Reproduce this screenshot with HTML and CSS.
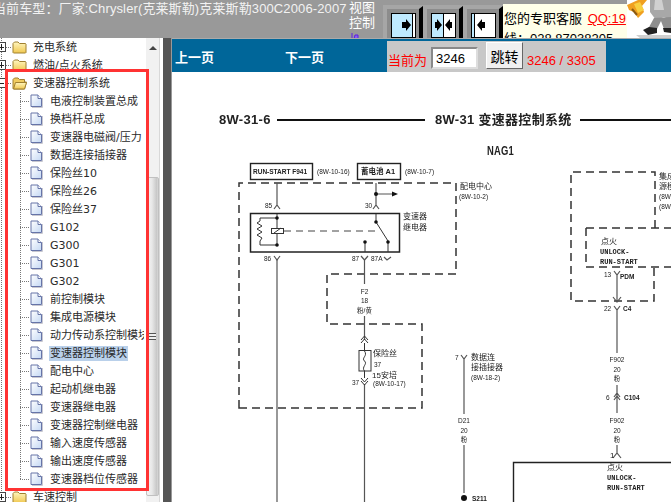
FILE: index.html
```html
<!DOCTYPE html>
<html lang="zh">
<head>
<meta charset="utf-8">
<title>变速器控制系统</title>
<link rel="stylesheet" href="styles.css">
</head>
<body>
<svg class="defs" aria-hidden="true">
  <defs>
    <linearGradient id="fold" x1="0" y1="0" x2="0" y2="1"><stop offset="0" stop-color="#fff6c0"/><stop offset="1" stop-color="#f0c850"/></linearGradient>
    <linearGradient id="page" x1="0" y1="0" x2="1" y2="1"><stop offset="0" stop-color="#ffffff"/><stop offset="1" stop-color="#c4d8f4"/></linearGradient>
    <symbol id="folder" viewBox="0 0 15 13"><path d="M1 11.5V2.5L2.5 1H6L7.5 2.5H13.5L14 3V11.5L13.5 12H1.5Z" fill="url(#fold)" stroke="#a08030"/></symbol>
    <symbol id="folder-open" viewBox="0 0 15 13"><path d="M1 11.5V2.5L2.5 1H6L7.5 2.5H12.5V5H14.5L12.5 12H1.5Z" fill="#f0cc60" stroke="#a08030"/><path d="M1.5 12L3.5 5.5H14.5L12.5 12Z" fill="url(#fold)" stroke="#a08030"/></symbol>
    <symbol id="doc" viewBox="0 0 13 14"><path d="M2 13.5H12.5V4" fill="none" stroke="#c8c8d0"/><path d="M1 1H8L11.5 4.5V12.5H1Z" fill="url(#page)" stroke="#6674a8"/><path d="M8 1V4.5H11.5" fill="#fff" stroke="#6674a8"/></symbol>
  </defs>
</svg>
<div class="app">
  <header class="topbar">
    <div class="title">当前车型：厂家:Chrysler(克莱斯勒)克莱斯勒300C2006-2007</div>
    <div class="view">视图<br>控制<svg class="viewmark" width="8" height="6" viewBox="0 0 8 6"><path d="M1 0V6M4 2H7V6H3Z" stroke="#5a20e0" fill="#8a60f0"/></svg></div>
    <div class="tool">
      <span class="toolframe">
        <svg class="toolicon" width="25" height="25" viewBox="0 0 25 25"><rect x=".5" y=".5" width="24" height="24" fill="#fff" stroke="#000"/><rect x="1" y="1" width="20" height="23" fill="#bfeaff"/><path d="M21.5 1V24" stroke="#000"/><path d="M11 9H15V6L20 12L15 18V15H11Z" fill="#000"/></svg>
      </span>
    </div>
    <div class="tool">
      <span class="toolframe">
        <svg class="toolicon" width="25" height="25" viewBox="0 0 25 25"><rect x=".5" y=".5" width="24" height="24" fill="#fff" stroke="#000"/><rect x="1" y="1" width="11" height="23" fill="#bfeaff"/><path d="M12.5 1V24" stroke="#000"/><path d="M4 9H6V6L11 12L6 18V15H4Z M21 9H19V6L14 12L19 18V15H21Z" fill="#000"/></svg>
      </span>
    </div>
    <div class="tool">
      <span class="toolframe">
        <svg class="toolicon" width="25" height="25" viewBox="0 0 25 25"><rect x=".5" y=".5" width="24" height="24" fill="#fff" stroke="#000"/><rect x="1" y="1" width="3" height="23" fill="#bfeaff"/><path d="M3.5 1V24" stroke="#000"/><path d="M14 9H11V6L6 12L11 18V15H14Z" fill="#000"/></svg>
      </span>
    </div>
    <div class="service">
      <div class="svcline">您的专职客服 <a class="qq">QQ:19</a></div>
      <div class="svcline">线：028 87038205</div>
    </div>
    <div class="mascot">
      <svg width="44" height="38" viewBox="627 0 44 38">
        <path d="M627 5L638 0H647L642 6L644 12L638 18L634 12L629 10Z" fill="#f0a020"/>
        <path d="M634 4L640 2L644 10L638 13Z" fill="#f8d040"/>
        <path d="M632 9L637 15" stroke="#8a5a10" stroke-width="2"/>
        <path d="M650 0H671V20L664 17L656 20L650 12Z" fill="#a8a8a8"/>
        <path d="M655 0L662 0L664 10H654Z" fill="#d0d0d0"/>
        <path d="M654 18L648 29H657L661 21L664 29H671V17Z" fill="#8e8e8e"/>
        <path d="M643 30L649 27L657 28L657 33L648 35Z" fill="#222"/>
        <path d="M663 28H671V33L664 32Z" fill="#222"/>
        <path d="M636 35H671V38H640Z" fill="#cfcfcf"/>
      </svg>
    </div>
  </header>
  <div class="main">
    <div class="sidebar">
      <ul class="tree">
        <li class="row"><i class="exp plus"></i><svg class="ico"><use href="#folder"/></svg><span class="lbl">充电系统</span></li>
        <li class="row"><i class="exp plus"></i><svg class="ico"><use href="#folder"/></svg><span class="lbl">燃油/点火系统</span></li>
        <li class="row"><i class="exp"></i><svg class="ico"><use href="#folder-open"/></svg><span class="lbl">变速器控制系统</span></li>
        <li class="row leaf"><svg class="docico"><use href="#doc"/></svg><span class="lbl">电液控制装置总成</span></li>
        <li class="row leaf"><svg class="docico"><use href="#doc"/></svg><span class="lbl">换档杆总成</span></li>
        <li class="row leaf"><svg class="docico"><use href="#doc"/></svg><span class="lbl">变速器电磁阀/压力</span></li>
        <li class="row leaf"><svg class="docico"><use href="#doc"/></svg><span class="lbl">数据连接插接器</span></li>
        <li class="row leaf"><svg class="docico"><use href="#doc"/></svg><span class="lbl">保险丝10</span></li>
        <li class="row leaf"><svg class="docico"><use href="#doc"/></svg><span class="lbl">保险丝26</span></li>
        <li class="row leaf"><svg class="docico"><use href="#doc"/></svg><span class="lbl">保险丝37</span></li>
        <li class="row leaf"><svg class="docico"><use href="#doc"/></svg><span class="lbl">G102</span></li>
        <li class="row leaf"><svg class="docico"><use href="#doc"/></svg><span class="lbl">G300</span></li>
        <li class="row leaf"><svg class="docico"><use href="#doc"/></svg><span class="lbl">G301</span></li>
        <li class="row leaf"><svg class="docico"><use href="#doc"/></svg><span class="lbl">G302</span></li>
        <li class="row leaf"><svg class="docico"><use href="#doc"/></svg><span class="lbl">前控制模块</span></li>
        <li class="row leaf"><svg class="docico"><use href="#doc"/></svg><span class="lbl">集成电源模块</span></li>
        <li class="row leaf"><svg class="docico"><use href="#doc"/></svg><span class="lbl">动力传动系控制模块</span></li>
        <li class="row leaf"><svg class="docico"><use href="#doc"/></svg><span class="lbl selected">变速器控制模块</span></li>
        <li class="row leaf"><svg class="docico"><use href="#doc"/></svg><span class="lbl">配电中心</span></li>
        <li class="row leaf"><svg class="docico"><use href="#doc"/></svg><span class="lbl">起动机继电器</span></li>
        <li class="row leaf"><svg class="docico"><use href="#doc"/></svg><span class="lbl">变速器继电器</span></li>
        <li class="row leaf"><svg class="docico"><use href="#doc"/></svg><span class="lbl">变速器控制继电器</span></li>
        <li class="row leaf"><svg class="docico"><use href="#doc"/></svg><span class="lbl">输入速度传感器</span></li>
        <li class="row leaf"><svg class="docico"><use href="#doc"/></svg><span class="lbl">输出速度传感器</span></li>
        <li class="row leaf last"><svg class="docico"><use href="#doc"/></svg><span class="lbl">变速器档位传感器</span></li>
        <li class="row"><i class="exp plus"></i><svg class="ico"><use href="#folder"/></svg><span class="lbl">车速控制</span></li>
      </ul>
      <div class="scrollbar">
        <div class="arrow"></div>
        <div class="thumb"><span class="grip"></span></div>
      </div>
      <div class="highlight"></div>
    </div>
    <div class="splitter"></div>
    <div class="content">
      <div class="pager">
        <a class="pagelink">上一页</a>
        <a class="pagelink">下一页</a>
        <form class="jump">
          <label class="cur">当前为</label>
          <input class="pageinput" value="3246">
          <button class="go" type="button">跳转</button>
          <span class="count">3246 / 3305</span>
        </form>
      </div>
      <svg class="diagram" width="499" height="430" viewBox="172 72 499 430">
        <text class="head" x="219" y="124">8W-31-6</text>
        <path class="rule" d="M277 120H425M580 120H671"/>
        <text class="head" x="435" y="124">8W-31 变速器控制系统</text>
        <text class="head" x="487" y="155" textLength="27" lengthAdjust="spacingAndGlyphs">NAG1</text>

        <rect class="box" x="250.5" y="163.5" width="62" height="16"/>
        <text class="bold6" x="253" y="174">RUN-START F941</text>
        <text class="t6" x="317" y="174">(8W-10-16)</text>
        <rect class="box" x="357.5" y="163.5" width="43" height="16"/>
        <text class="bold7" x="361" y="174">蓄电池 A1</text>
        <text class="t6" x="405" y="174">(8W-10-7)</text>

        <path class="dash" d="M239 408V183H456V274H327V324H422V408Z"/>
        <text class="t8" x="460" y="189">配电中心</text>
        <text class="t6" x="459" y="199">(8W-10-2)</text>

        <path class="wire" d="M277 183V206M376 183V206M376 194H392M274 209L277 205L280 209M373 209L376 205L379 209"/>
        <path class="fill" d="M392 191.5L398 194L392 196.5Z"/>
        <circle class="fill" cx="376" cy="194" r="2"/>
        <text class="t6" x="265" y="208">85</text>
        <text class="t6" x="365" y="208">30</text>

        <rect class="relay" x="250.5" y="213.5" width="149" height="38.5"/>
        <text class="t8" x="403" y="219">变速器</text>
        <text class="t8" x="403" y="230">继电器</text>
        <path class="thin" d="M277 214V228M277 234V245M277 218H260V221L257 223L262 226L257 229L262 232L257 235L262 238L260 241V245H277"/>
        <rect class="thin" x="271.5" y="228.5" width="12" height="5"/>
        <path class="thin" d="M274 233L281 228"/>
        <path class="dashthin" d="M284 231H376"/>
        <circle class="fill" cx="277" cy="218" r="1.8"/>
        <circle class="fill" cx="277" cy="245" r="1.8"/>
        <path class="thin" d="M376 214V222L388 241V252M365 241V252"/>
        <circle class="fill" cx="376" cy="222" r="1.8"/>
        <circle class="fill" cx="388" cy="242" r="1.8"/>
        <circle class="fill" cx="365" cy="242" r="1.8"/>

        <text class="t6" x="264" y="261">86</text>
        <text class="t6" x="352" y="261">87</text>
        <text class="t6" x="371" y="261">87A</text>
        <path class="wire" d="M274 256L277 260L280 256M361 256L364.500 260L368 256M384 257L387 260L391 257"/>
        <path class="wire" d="M277 260V502M364.500 260V284M364.500 316V340M364.500 384V502"/>
        <text class="mid6" x="364.500" y="294">F2</text>
        <text class="mid6" x="364.500" y="303">18</text>
        <text class="mid6" x="364.500" y="313">粉/黄</text>
        <path class="thin" d="M361 340L364.500 336L368 340M361 343L364.500 339L368 343M361 378L364.500 382L368 378M361 381L364.500 385L368 381"/>
        <rect class="thin" x="359" y="350.500" width="12" height="20.500"/>
        <path class="thin" d="M364.500 343V350M364.500 371V378M364.500 351C368 356 361 358 364.500 361C368 364 361 367 364.500 371"/>
        <text class="t8" x="373" y="356">保险丝</text>
        <text class="t6" x="374" y="367">37</text>
        <text class="t8" x="372" y="378">15安培</text>
        <text class="t6" x="373" y="386">(8W-10-17)</text>
        <text class="t6" x="352" y="385">37</text>

        <path class="wire" d="M461 355L464 359L467 355M464 359V414M464 445V493"/>
        <text class="t6" x="455" y="360">7</text>
        <text class="t8" x="471" y="360">数据连</text>
        <text class="t8" x="471" y="370">接插接器</text>
        <text class="t6" x="471" y="380">(8W-18-2)</text>
        <text class="mid6" x="464" y="423">D21</text>
        <text class="mid6" x="464" y="433">20</text>
        <text class="mid6" x="464" y="442">粉</text>
        <circle class="fill" cx="464" cy="498" r="3"/>
        <text class="bold6" x="472" y="501">S211</text>

        <path class="dash" d="M655 228V172H571V301H654V267M586 228V267H671M586 228H671"/>
        <text class="t8" x="659" y="179">集成</text>
        <text class="t8" x="659" y="189">源模</text>
        <text class="t6" x="659" y="199">(8W-</text>
        <text class="t6" x="659" y="209">(8W-</text>
        <text class="t8" x="601" y="244">点火</text>
        <text class="mono" x="600" y="254">UNLOCK-</text>
        <text class="mono" x="600" y="264">RUN-START</text>
        <text class="t6" x="604" y="277">13</text>
        <text class="bold6" x="620" y="279">PDM</text>
        <path class="wire" d="M614 271L617 275L620 271M617 275V302M613 297L617 302L621 297M614 306L617 310L620 306M617 310V353"/>
        <text class="t6" x="604" y="311">22</text>
        <text class="bold6" x="623" y="311">C4</text>
        <text class="mid6" x="617" y="362">F902</text>
        <text class="mid6" x="617" y="372">20</text>
        <text class="mid6" x="617" y="381">粉</text>
        <path class="wire" d="M617 385V413M614 397L617 393L620 397M614 400L617 396L620 400"/>
        <text class="t6" x="606" y="400">6</text>
        <text class="bold6" x="624" y="400">C104</text>
        <text class="mid6" x="617" y="423">F902</text>
        <text class="mid6" x="617" y="433">20</text>
        <text class="mid6" x="617" y="442">粉</text>
        <path class="wire" d="M617 445V454M613 458L617 453L621 458"/>
        <text class="t7" x="610" y="458">1</text>
        <path class="box" d="M671 462.500H513.500V502"/>
        <text class="t8" x="607" y="470">点火</text>
        <text class="mono" x="607" y="480">UNLOCK-</text>
        <text class="mono" x="607" y="490">RUN-START</text>
      </svg>
    </div>
  </div>
</div>
</body>
</html>
```

FILE: styles.css
```css
* { box-sizing: border-box; }
html, body { margin: 0; padding: 0; height: 100%; overflow: hidden; background: #fff; }
.defs { position: absolute; width: 0; height: 0; }
.app { width: 671px; height: 502px; display: flex; flex-direction: column; overflow: hidden; font-family: "Liberation Sans", "Noto Sans CJK SC", sans-serif; }

.topbar { height: 38px; flex: none; display: flex; background: #999; overflow: hidden; }
.title { width: 355px; flex: none; margin-left: -7px; font-size: 13px; line-height: 17px; letter-spacing: .12px; color: #f2f2f2; white-space: nowrap; }
.view { width: 35px; flex: none; padding-left: 1px; font-size: 13px; line-height: 15px; color: #fff; }
.viewmark { display: block; margin: 3px 0 0 2px; }
.tool { width: 40px; flex: none; margin-top: 5px; padding: 1px 0 0 4px; background: #a6a6a6; }
.toolframe { display: block; height: 32px; padding: 7px 0 0 4px; background: #8c8c8c; border-right: 4px solid #000; clip-path: polygon(0 3px, calc(100% - 4px) 3px, 100% 0, 100% 100%, 0 100%); }
.toolicon { display: block; }
.service { width: 124px; flex: none; margin-top: 4px; padding: 5px 0 0 1px; background: #ffffe8; font-size: 13px; line-height: 20px; color: #000; overflow: hidden; white-space: nowrap; }
.svcline { height: 20px; }
.qq { color: #f00; text-decoration: underline; margin-left: 2px; }
.mascot { flex: none; width: 44px; background: #fff; }
.mascot svg { display: block; }

.main { flex: 1; min-height: 0; display: flex; }
.sidebar { width: 163px; flex: none; display: flex; background: #fff; position: relative; overflow: hidden; }
.tree { width: 144px; flex: none; margin: 0 2px 0 0; list-style: none; padding: 0; overflow: hidden; }
.row { height: 18px; display: flex; align-items: center; position: relative; padding-left: 12px; white-space: nowrap; font-family: "DejaVu Sans", "Noto Sans CJK SC", sans-serif; font-size: 11px; color: #2a2a2a;
  background-image: repeating-linear-gradient(to bottom, #777 0 1px, transparent 1px 2px), repeating-linear-gradient(to right, #777 0 1px, transparent 1px 2px);
  background-size: 1px 100%, 6px 1px; background-position: 1px 0, 6px 9px; background-repeat: no-repeat; }
.leaf { padding-left: 30px;
  background-image: repeating-linear-gradient(to bottom, #777 0 1px, transparent 1px 2px), repeating-linear-gradient(to bottom, #777 0 1px, transparent 1px 2px), repeating-linear-gradient(to right, #777 0 1px, transparent 1px 2px);
  background-size: 1px 100%, 1px 100%, 10px 1px; background-position: 1px 0, 20px 0, 20px 9px; }
.last { background-size: 1px 100%, 1px 10px, 10px 1px; }
.exp { position: absolute; left: -4px; top: 4px; width: 10px; height: 10px; border: 1px solid #444; background: linear-gradient(#222, #222) center / 6px 1px no-repeat, #fff; }
.plus { background: linear-gradient(#222, #222) center / 6px 1px no-repeat, linear-gradient(#222, #222) center / 1px 6px no-repeat, #fff; }
.ico { width: 15px; height: 13px; flex: none; }
.docico { width: 13px; height: 14px; flex: none; }
.lbl { margin-left: 5px; padding: 0 1px; line-height: 15px; height: 15px; }
.leaf .lbl { margin-left: 6px; }
.selected { background: #b9d0ea; }
.scrollbar { width: 14px; flex: none; background: #f1f1f1; position: relative; display: flex; flex-direction: column; border-right: 1px solid #d8d8d8; }
.arrow { height: 139px; flex: none; padding-top: 8px; }
.arrow::before { content: ""; display: block; margin: 0 auto; width: 0; height: 0; border: 4px solid transparent; border-top: 0; border-bottom: 4px solid #444; }
.thumb { height: 319px; flex: none; background: linear-gradient(to right, #f4f4f4, #e8e8e8 45%, #c6c6c6 90%, #dcdcdc); border: 1px solid #c0c0c0; border-radius: 2px; display: flex; align-items: center; justify-content: center; }
.grip { display: block; width: 7px; height: 7px; background: repeating-linear-gradient(to bottom, #555 0 1px, #eee 1px 3px); }
.highlight { position: absolute; left: 5px; top: 31px; width: 144px; height: 422px; border: 3px solid #f33; }
.splitter { width: 9px; flex: none; background: #555; border-right: 1px solid #999; box-shadow: 1px 0 0 #999; }

.content { flex: 1; min-width: 0; display: flex; flex-direction: column; background: #fff; }
.pager { height: 34px; flex: none; background: #069; border-top: 1px solid #aaa; display: flex; align-items: flex-end; padding-left: 3px; }
.pagelink { width: 110px; flex: none; align-self: center; font-family: "Liberation Serif", "Noto Sans CJK SC", serif; font-size: 13px; font-weight: 700; color: #fff; margin-top: 1px; }
.jump { width: 219px; height: 31px; flex: none; margin-left: -8px; background: #c8c8c8; display: flex; align-items: flex-start; color: #f00; font-size: 13px; }
.cur { margin: 11px 0 0 1px; line-height: 17px; white-space: nowrap; width: 43px; flex: none; }
.pageinput { width: 47px; height: 22px; margin-top: 6px; padding: 0 0 0 3px; border: 2px inset #ddd; background: #fff; font: 13px "Liberation Sans", sans-serif; color: #000; }
.go { width: 37px; height: 27px; margin: 1px 0 0 8px; padding: 0; border: 1px solid; border-color: #fff #666 #666 #fff; background: #f0f0f0; font: 14px "Noto Sans CJK SC", sans-serif; color: #000; }
.count { margin: 12px 0 0 4px; white-space: nowrap; line-height: 16px; }

.diagram { display: block; flex: none; filter: blur(.35px); font-family: "Liberation Sans", "Noto Sans CJK SC", sans-serif; }
.diagram text { fill: #222; }
.head { font-size: 13px; font-weight: 700; letter-spacing: .3px; }
.rule { fill: none; stroke: #111; stroke-width: 2; }
.box { fill: none; stroke: #222; stroke-width: 1.4; }
.relay { fill: none; stroke: #222; stroke-width: 1.5; }
.dash { fill: none; stroke: #333; stroke-width: 1.5; stroke-dasharray: 8 5; }
.dashthin { fill: none; stroke: #444; stroke-width: 1; stroke-dasharray: 7 5; }
.wire { fill: none; stroke: #555; stroke-width: 1.2; }
.thin { fill: none; stroke: #333; stroke-width: 1; }
.fill { fill: #111; }
.t6 { font-size: 6.5px; }
.t7 { font-size: 8px; }
.t8 { font-size: 8px; }
.bold6 { font-size: 6.5px; font-weight: 700; }
.bold7 { font-size: 7.5px; font-weight: 700; }
.mid6 { font-size: 6.5px; text-anchor: middle; }
.mono { font-family: "Liberation Mono", monospace; font-size: 7px; font-weight: 700; }
```
